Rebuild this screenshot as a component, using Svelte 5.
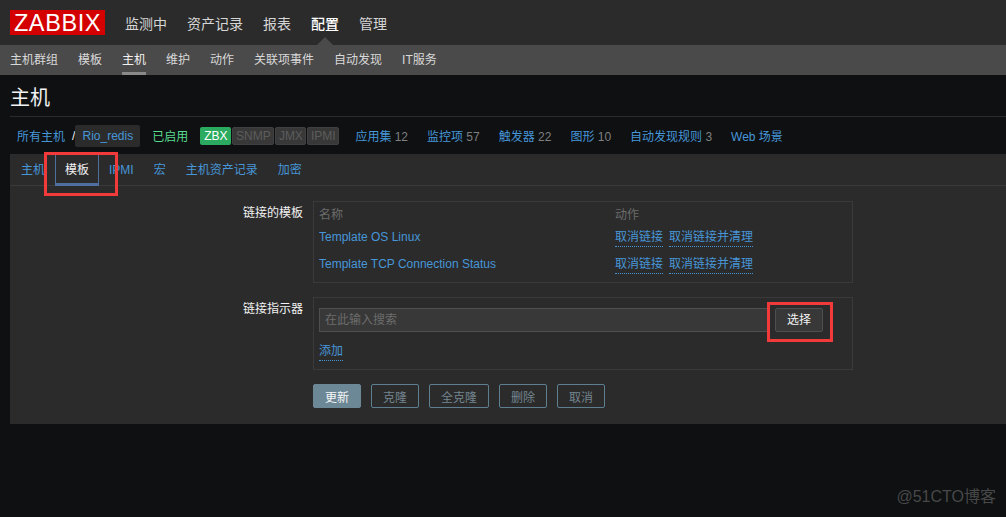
<script>
  const mainNav = ['监测中', '资产记录', '报表', '配置', '管理'];
  const subNav = ['主机群组', '模板', '主机', '维护', '动作', '关联项事件', '自动发现', 'IT服务'];
  const stats = [['应用集', '12'], ['监控项', '57'], ['触发器', '22'], ['图形', '10'], ['自动发现规则', '3'], ['Web 场景', '']];
  const tabs = ['主机', '模板', 'IPMI', '宏', '主机资产记录', '加密'];
  const templates = ['Template OS Linux', 'Template TCP Connection Status'];
  const buttons = ['克隆', '全克隆', '删除', '取消'];
</script>

<div class="page">
  <header class="top">
    <div class="logo">ZABBIX</div>
    <nav class="main-nav">
      {#each mainNav as item}
        <span class:on={item === '配置'}>{item}</span>
      {/each}
    </nav>
    <i class="caret"></i>
  </header>
  <nav class="sub-nav">
    {#each subNav as item}
      <span class:on={item === '主机'}>{item}</span>
    {/each}
  </nav>

  <h1>主机</h1>

  <div class="crumbs">
    <span class="link">所有主机</span>
    <span class="slash">/</span>
    <span class="chip link">Rio_redis</span>
    <span class="enabled">已启用</span>
    <div class="status">
      <span class="zbx">ZBX</span><span class="off snmp">SNMP</span><span class="off jmx">JMX</span><span class="off ipmi">IPMI</span>
    </div>
    <div class="stats">
      {#each stats as [name, count]}
        <span class="stat"><span class="link">{name}</span>{#if count}<span class="count">{count}</span>{/if}</span>
      {/each}
    </div>
  </div>

  <section class="panel">
    <div class="tabs">
      {#each tabs as tab}
        <span class="tab" class:active={tab === '模板'}>{tab}</span>
      {/each}
    </div>
    <i class="mark mark-tab"></i>

    <div class="form">
      <div class="row">
        <div class="label">链接的模板</div>
        <div class="box linked">
          <div class="thead"><span class="c1">名称</span><span>动作</span></div>
          {#each templates as t}
            <div class="tr">
              <span class="c1 link">{t}</span>
              <span class="dotted">取消链接</span>
              <span class="dotted">取消链接并清理</span>
            </div>
          {/each}
        </div>
      </div>

      <div class="row second">
        <div class="label">链接指示器</div>
        <div class="box picker">
          <div class="search">
            <div class="input">在此输入搜索</div>
            <div class="select">选择<i class="mark mark-select"></i></div>
          </div>
          <span class="dotted add">添加</span>
        </div>
      </div>

      <div class="actions">
        <button class="primary">更新</button>
        {#each buttons as b}
          <button>{b}</button>
        {/each}
      </div>
    </div>
  </section>

  <div class="watermark">@51CTO博客</div>
</div>

<style>
  :global(body) {
    margin: 0;
    background: #0e1012;
  }
  .page {
    position: relative;
    width: 1006px;
    height: 517px;
    overflow: hidden;
    background: #0e1012;
    font: 12px "Liberation Sans", "Noto Sans CJK SC", sans-serif;
    color: #f2f2f2;
  }
  .top {
    position: relative;
    display: flex;
    align-items: center;
    height: 45px;
    padding-left: 10px;
    background: #2b2b2b;
    box-sizing: border-box;
  }
  .logo {
    width: 95px;
    height: 25px;
    background: #d40000;
    color: #fff;
    font-size: 23.5px;
    line-height: 26px;
    text-align: center;
    letter-spacing: 0.6px;
  }
  .main-nav {
    display: flex;
    gap: 20px;
    margin-left: 20px;
    font-size: 14px;
    color: #d6d6d6;
  }
  .main-nav .on {
    color: #fff;
    font-weight: 500;
  }
  .caret {
    position: absolute;
    left: 317px;
    top: 37px;
    border: 8px solid transparent;
    border-top: 0;
    border-bottom-color: #4a4a4a;
  }
  .sub-nav {
    display: flex;
    gap: 20px;
    height: 30px;
    padding-left: 10px;
    background: #4a4a4a;
    color: #d9d9d9;
    line-height: 30px;
  }
  .sub-nav span {
    box-sizing: border-box;
    height: 30px;
  }
  .sub-nav .on {
    color: #f2f2f2;
    border-bottom: 3px solid #8a8a8a;
  }
  h1 {
    margin: 0 0 0 10px;
    height: 41px;
    border-bottom: 1px solid #2b2b2b;
    font-size: 20px;
    font-weight: 400;
    line-height: 46px;
    color: #f2f2f2;
  }
  .link {
    color: #4796d8;
  }
  .crumbs {
    display: flex;
    align-items: center;
    height: 37px;
    padding-left: 17px;
  }
  .slash {
    margin-left: 7px;
    color: #f2f2f2;
  }
  .chip {
    box-sizing: border-box;
    width: 65px;
    height: 22px;
    border-radius: 2px;
    background: #2b2b2b;
    text-align: center;
    line-height: 22px;
  }
  .enabled {
    margin-left: 12px;
    color: #59db8f;
  }
  .status {
    display: flex;
    gap: 1px;
    margin-left: 12px;
    height: 18px;
    line-height: 18px;
    text-align: center;
  }
  .status span {
    box-sizing: border-box;
    border-radius: 2px;
  }
  .zbx {
    width: 31px;
    background: #2bab60;
    color: #fff;
  }
  .off {
    background: #383838;
    color: #5c5c5c;
    border: 1px solid #404040;
    line-height: 16px;
  }
  .snmp { width: 42px; }
  .jmx { width: 31px; }
  .ipmi { width: 32px; }
  .stats {
    display: flex;
    gap: 19px;
    margin-left: 16px;
  }
  .count {
    margin-left: 3.3px;
    color: #7f7f7f;
  }
  .panel {
    position: relative;
    margin-left: 10px;
    height: 270px;
    background: #2b2b2b;
  }
  .tabs {
    display: flex;
    gap: 20px;
    box-sizing: border-box;
    height: 32px;
    padding-left: 11px;
    border-bottom: 1px solid #3a3a3a;
    line-height: 33px;
  }
  .tab {
    color: #4796d8;
  }
  .active {
    box-sizing: border-box;
    height: 32px;
    margin: 0 -10px;
    padding: 0 9px;
    border: 1px solid #4f6f9f;
    border-bottom: 3px solid #4f6f9f;
    color: #f2f2f2;
    line-height: 31px;
  }
  .mark {
    position: absolute;
    box-sizing: border-box;
    border: 3px solid #f23a3a;
  }
  .mark-tab {
    left: 34px;
    top: -2px;
    width: 74px;
    height: 44px;
  }
  .mark-select {
    left: -9px;
    top: -7px;
    width: 66px;
    height: 40px;
  }
  .form {
    padding: 15px 0 0 0;
  }
  .row {
    display: flex;
  }
  .second {
    margin-top: 14px;
  }
  .label {
    box-sizing: border-box;
    width: 293px;
    padding: 2px 0 0;
    text-align: right;
    color: #f2f2f2;
  }
  .box {
    box-sizing: border-box;
    width: 540px;
    margin-left: 10px;
    border: 1px solid #3a3a3a;
    padding: 0 5px;
  }
  .linked {
    height: 82px;
  }
  .picker {
    height: 73px;
    padding-top: 10px;
  }
  .thead {
    display: flex;
    height: 25px;
    line-height: 27px;
    color: #6c6c6c;
  }
  .c1 {
    width: 296px;
  }
  .tr {
    display: flex;
    height: 27px;
    line-height: 20px;
  }
  .tr .dotted + .dotted {
    margin-left: 6px;
  }
  .dotted {
    align-self: flex-start;
    height: 17px;
    line-height: 17px;
    margin-top: 2px;
    border-bottom: 1px dotted #4796d8;
    color: #4796d8;
  }
  .search {
    display: flex;
    gap: 6px;
  }
  .input {
    box-sizing: border-box;
    width: 450px;
    height: 24px;
    padding-left: 5px;
    background: #383838;
    border: 1px solid #4f4f4f;
    color: #6c6c6c;
    line-height: 23px;
  }
  .select {
    position: relative;
    box-sizing: border-box;
    width: 48px;
    height: 24px;
    background: #383838;
    border: 1px solid #4f4f4f;
    border-radius: 2px;
    color: #f2f2f2;
    line-height: 23px;
    text-align: center;
  }
  .add {
    display: inline-block;
    margin-top: 11px;
  }
  .actions {
    display: flex;
    gap: 10px;
    margin: 14px 0 0 303px;
  }
  button {
    box-sizing: border-box;
    min-width: 48px;
    height: 24px;
    padding: 0 11px;
    font: inherit;
    background: transparent;
    border: 1px solid #5f7f90;
    border-radius: 2px;
    color: #74858f;
  }
  .primary {
    background: #6c8795;
    color: #f6f6f6;
    border-color: #6c8795;
  }
  .watermark {
    position: absolute;
    right: 10px;
    top: 487px;
    font-size: 16px;
    line-height: 20px;
    color: #484848;
  }
</style>
